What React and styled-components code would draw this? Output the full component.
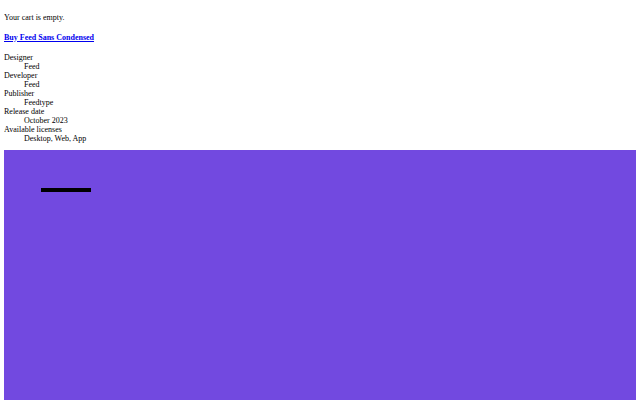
import React from "react";
import styled, { createGlobalStyle } from "styled-components";

const GlobalStyle = createGlobalStyle`
  body {
    margin: 5px 4px 4px;
    font-family: "Liberation Serif", "Times New Roman", serif;
    font-size: 8px;
    line-height: 9px;
    color: #000;
    background: #fff;
  }
`;

const details = [
  ["Designer", "Feed"],
  ["Developer", "Feed"],
  ["Publisher", "Feedtype"],
  ["Release date", "October 2023"],
  ["Available licenses", "Desktop, Web, App"],
];

const CartNote = styled.p`
  margin: 8px 0;
`;

const BuyHeading = styled.h4`
  margin: 10.6px 0 11.6px;
  font-size: 8px;
  font-weight: bold;
`;

const BuyLink = styled.a`
  color: #0000ee;
  text-decoration: underline;
`;

const Details = styled.dl`
  margin: 8px 0 7px;
`;

const Term = styled.dt``;

const Value = styled.dd`
  margin-left: 20px;
`;

const Hero = styled.section`
  background: #7249e0;
  height: 260px;
  padding: 37.5px 37px;
  box-sizing: border-box;
`;

const Bar = styled.div`
  width: 50px;
  height: 4px;
  background: #000;
`;

const App = () => {
  return (
    <>
      <GlobalStyle />
      <CartNote>Your cart is empty.</CartNote>
      <BuyHeading>
        <BuyLink href="#">Buy Feed Sans Condensed</BuyLink>
      </BuyHeading>
      <Details>
        {details.map(([term, value]) => (
          <React.Fragment key={term}>
            <Term>{term}</Term>
            <Value>{value}</Value>
          </React.Fragment>
        ))}
      </Details>
      <Hero>
        <Bar />
      </Hero>
    </>
  );
};

export default App;
